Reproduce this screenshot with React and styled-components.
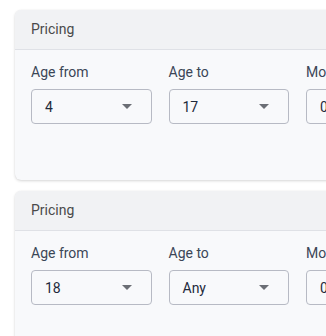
import React from "react";
import styled, { createGlobalStyle } from "styled-components";

const GlobalStyle = createGlobalStyle`
  html, body {
    margin: 0;
    padding: 0;
    background: #ffffff;
    overflow: hidden;
    font-family: Roboto, "Liberation Sans", Arial, sans-serif;
  }
`;

const tiers = [
  { id: 1, from: "4", to: "17", price: "0.00" },
  { id: 2, from: "18", to: "Any", price: "0.00" },
];

export default function App() {
  return (
    <Page>
      <GlobalStyle />
      {tiers.map((t) => (
        <Card key={t.id}>
          <CardHeader>Pricing</CardHeader>
          <CardBody>
            <Field>
              <Label>Age from</Label>
              <Select>
                <Value>{t.from}</Value>
                <Caret />
              </Select>
            </Field>
            <Field>
              <Label>Age to</Label>
              <Select>
                <Value>{t.to}</Value>
                <Caret />
              </Select>
            </Field>
            <Field>
              <Label>Monthly price</Label>
              <Select>
                <Value>{t.price}</Value>
              </Select>
            </Field>
          </CardBody>
        </Card>
      ))}
    </Page>
  );
}

const Page = styled.div`
  width: 600px;
  padding: 10px 0 0 15px;
  display: flex;
  flex-direction: column;
  gap: 11px;
`;

const Card = styled.section`
  width: 560px;
  background: #f8f9fb;
  border-radius: 6px;
  box-shadow: 0 1px 3px rgba(0, 0, 0, 0.16), 0 0 1px rgba(0, 0, 0, 0.08);
  overflow: hidden;
`;

const CardHeader = styled.div`
  height: 39px;
  line-height: 38px;
  padding: 0 16px;
  background: #f1f2f4;
  border-bottom: 1px solid #dfe1e6;
  font-size: 14px;
  color: #4a4a4a;
`;

const CardBody = styled.div`
  display: grid;
  grid-template-columns: repeat(3, 120.5px);
  column-gap: 17px;
  padding: 12px 16px 56px;
`;

const Field = styled.div`
  display: flex;
  flex-direction: column;
  gap: 7px;
`;

const Label = styled.div`
  font-size: 14px;
  line-height: 20px;
  color: #3b4657;
  white-space: nowrap;
`;

const Select = styled.div`
  box-sizing: border-box;
  height: 35px;
  display: flex;
  align-items: center;
  justify-content: space-between;
  padding: 0 19px 0 13px;
  border: 1px solid #b7bac4;
  border-radius: 4px;
  background: #f8f9fb;
`;

const Value = styled.span`
  font-size: 14px;
  color: #1e2a3b;
`;

const Caret = styled.span`
  width: 0;
  height: 0;
  border-left: 5px solid transparent;
  border-right: 5px solid transparent;
  border-top: 5px solid #6b6e75;
`;
